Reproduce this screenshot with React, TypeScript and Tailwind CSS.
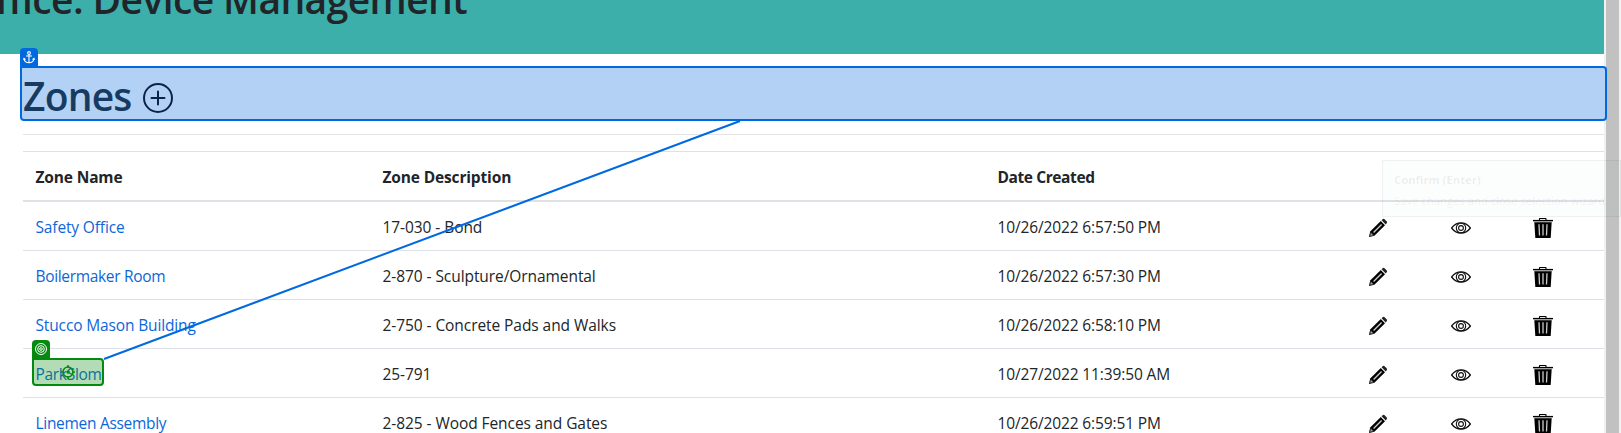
type Zone = { name: string; description: string; created: string; tracking: string };

const zones: Zone[] = [
  { name: "Safety Office", description: "17-030 - Bond", created: "10/26/2022 6:57:50 PM", tracking: "tracking-[-0.14px]" },
  { name: "Boilermaker Room", description: "2-870 - Sculpture/Ornamental", created: "10/26/2022 6:57:30 PM", tracking: "tracking-[-0.33px]" },
  { name: "Stucco Mason Building", description: "2-750 - Concrete Pads and Walks", created: "10/26/2022 6:58:10 PM", tracking: "tracking-[-0.14px]" },
  { name: "ParkSlom", description: "25-791", created: "10/27/2022 11:39:50 AM", tracking: "tracking-[-0.3px]" },
  { name: "Linemen Assembly", description: "2-825 - Wood Fences and Gates", created: "10/26/2022 6:59:51 PM", tracking: "tracking-[-0.3px]" },
];

function Pencil() {
  return (
    <svg className="h-5 w-5 shrink-0" viewBox="0 0 20 20">
      <path d="M1 19 2.2 13.6 12.8 3 17 7.2 6.4 17.8Z" fill="#000" />
      <path d="M13.6 2.2 14.9 1Q15.8.5 16.6 1.2L18.8 3.4Q19.4 4.2 18.8 5L17.7 6.4Z" fill="#222" />
      <path d="M5.6 14.5 13.6 6.5" stroke="#ccc" strokeWidth="1.3" />
      <path d="M1.9 17.9 2.8 14.5 5.6 17.2Z" fill="#aaa" stroke="#333" strokeWidth=".6" />
      <path d="m13.2 2.6 4.2 4.2" stroke="#ccc" strokeWidth=".8" />
    </svg>
  );
}

function Eye() {
  return (
    <svg className="h-5 w-5 shrink-0" viewBox="0 0 20 20" fill="none" stroke="#111">
      <path d="M.6 10Q4.5 4.9 10 4.9T19.4 10Q15.5 15.1 10 15.1T.6 10Z" strokeWidth="1.3" />
      <circle cx="10" cy="10" r="4.7" strokeWidth="1.1" />
      <circle cx="10" cy="10" r="2.4" strokeWidth="1.1" />
    </svg>
  );
}

function Trash() {
  return (
    <svg className="h-5 w-5 shrink-0" viewBox="0 0 20 20">
      <path d="M6.5 2V1Q6.5.5 7 .5H12.5Q13 .5 13 1V2" fill="none" stroke="#000" strokeWidth="1.1" />
      <path d="M0 1.9H20V3.3H0Z" fill="#000" />
      <path d="M1 3.3H19V4.3H1Z" fill="#999" />
      <path d="M1.3 4.2H18.7L17.7 20H2.3Z" fill="#000" />
      <path d="M6 6.2 6.5 17.5M10 6.2V17.5M14 6.2 13.5 17.5" stroke="#ccc" strokeWidth="1.3" />
    </svg>
  );
}

function SelectedHeading() {
  return (
    <div className="relative mt-3 ml-5 flex h-[55px] w-[1587px] items-center rounded-[4px] rounded-tl-none border-2 border-[#0069e0] bg-[#b3d1f5]">
      <div className="absolute -top-5 -left-0.5 flex h-5 w-[18px] justify-center rounded-t-[4px] bg-[#0069e0] pt-[3px]">
        <svg className="h-[13px] w-3" viewBox="0 0 12 13" fill="none" stroke="#fff" strokeWidth="1.1">
          <circle cx="6" cy="2" r="1.4" />
          <path d="M6 3.4V11.5M3 5H9M1 7.5Q1.5 11.7 6 11.8 10.5 11.7 11 7.5M.6 9 1 7.4 2.5 8.5M11.4 9 11 7.4 9.5 8.5" />
        </svg>
      </div>
      <h1 className="ml-px w-[120px] pt-[4px] text-[39px] leading-[48px] font-semibold tracking-[-0.8px] whitespace-nowrap text-[#173a61]">Zones</h1>
      <svg className="mt-[9px] h-[30px] w-[30px]" viewBox="0 0 30 30" fill="none" stroke="#0b2545" strokeWidth="2">
        <circle cx="15" cy="15" r="14" />
        <path d="M8.5 15H21.5M15 8.5V21.5" strokeLinecap="round" />
      </svg>
    </div>
  );
}

function TargetBadge() {
  return (
    <div className="absolute top-[9px] left-[9px] h-7 w-18 rounded-[4px] rounded-tl-none border-2 border-[#048a0e] bg-[#048a0e]/30">
      <div className="absolute -top-5 -left-0.5 flex h-5 w-[18px] justify-center rounded-t-[4px] bg-[#048a0e] pt-[3px]">
        <svg className="h-3 w-3" viewBox="0 0 12 12" fill="none" stroke="#fff" strokeWidth="1">
          <circle cx="6" cy="6" r="5.5" />
          <circle cx="6" cy="6" r="3.3" />
          <circle cx="6" cy="6" r="1.3" />
        </svg>
      </div>
      <svg className="absolute top-[5px] left-[27px] h-[14px] w-[14px]" viewBox="0 0 14 14" fill="none" stroke="#048a0e" strokeWidth="1.5">
        <circle cx="7" cy="7" r="5" />
        <path d="M7 0V3M7 11V14M0 7H3M11 7H14" />
        <circle cx="7" cy="7" r="1.7" fill="#048a0e" stroke="none" />
      </svg>
    </div>
  );
}

export default function App() {
  return (
    <div className="relative flex h-[433px] w-[1621px] overflow-hidden bg-white font-['Open_Sans','Noto_Sans',sans-serif] text-[#212529]">
      <main className="w-[1604px] shrink-0">
        <header className="flex h-[54px] w-full justify-start bg-[#3cafaa]">
          <div className="-mt-[29px] flex w-[467px] shrink-0 justify-end">
            <h1 className="text-[39px] leading-[56px] font-semibold tracking-[-0.6px] whitespace-nowrap">Office: Device Management</h1>
          </div>
        </header>
        <SelectedHeading />
        <div className="ml-[23px]">
          <hr className="mt-[13px] border-[#e2e3e4]" />
          <div className="mt-4 grid h-[51px] grid-cols-[347px_615px_1fr] items-center border-t border-b-2 border-[#dee2e6] pl-[12.5px] text-[15.5px] font-bold">
            <span className="pt-[3px] tracking-[-0.15px]">Zone Name</span>
            <span className="pt-[3px] tracking-[-0.15px]">Zone Description</span>
            <span className="pt-[3px] tracking-[-0.4px]">Date Created</span>
          </div>
          {zones.map((zone) => (
            <div key={zone.name} className="relative grid h-[49px] grid-cols-[347px_615px_370px_83px_82px_1fr] items-center border-b border-[#dee2e6] pl-[12.5px] text-[15.5px] whitespace-nowrap">
              <span className={`pt-[3px] text-[#0d66d9] ${zone.tracking}`}>{zone.name}</span>
              <span className="pt-[3px] tracking-[-0.07px]">{zone.description}</span>
              <span className="pt-[3px] tracking-[-0.13px]">{zone.created}</span>
              <div className="pt-1"><Pencil /></div>
              <div className="pt-1 pl-[0.5px]"><Eye /></div>
              <div className="pt-1 pl-[0.5px]"><Trash /></div>
              {zone.name === "ParkSlom" && <TargetBadge />}
            </div>
          ))}
        </div>
      </main>
      <div className="flex w-[17px] shrink-0 bg-[#f1f1f1] px-0.5">
        <div className="h-full w-[13px] bg-[#c1c1c1]" />
      </div>
      <svg className="pointer-events-none absolute inset-0 h-[433px] w-[1621px]" viewBox="0 0 1621 433">
        <path d="M740 121 104 359" stroke="#0069e0" strokeWidth="2" />
      </svg>
      <div className="absolute top-[160px] left-[1382px] h-[57px] w-[239px] border border-black/5 bg-[#1a4a3a]/[0.01] pt-[9px] pl-[11px] text-[11.3px] leading-[20.5px] whitespace-nowrap text-black/[0.07]">
        <p className="font-bold">Confirm (Enter)</p>
        <p>Save changes and close selection wizard.</p>
      </div>
    </div>
  );
}
